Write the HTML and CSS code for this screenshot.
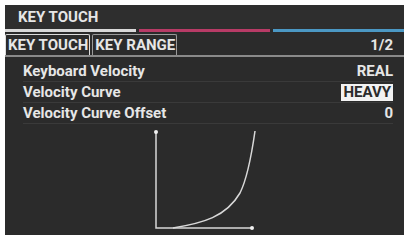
FILE: index.html
```html
<!DOCTYPE html>
<html lang="en">
<head>
    <meta charset="UTF-8">
    <title>Key Touch</title>
    <link rel="stylesheet" href="styles.css">
</head>
<body>
    <div class="screen">
        <div class="title">KEY TOUCH</div>
        <div class="bars">
            <div class="bar white"></div>
            <div class="bar pink"></div>
            <div class="bar blue"></div>
        </div>
        <div class="tabs">
            <div class="tab active">KEY TOUCH</div>
            <div class="tab">KEY RANGE</div>
            <div class="page">1/2</div>
        </div>
        <div class="params">
            <div class="row">
                <span class="label">Keyboard Velocity</span>
                <span class="value">REAL</span>
            </div>
            <div class="row">
                <span class="label">Velocity Curve</span>
                <span class="value selected">HEAVY</span>
            </div>
            <div class="row">
                <span class="label">Velocity Curve Offset</span>
                <span class="value">0</span>
            </div>
        </div>
        <div class="graph">
            <svg width="110" height="104" viewBox="0 0 110 104">
                <!-- axes -->
                <path d="M8 5 V101 H104" fill="none" stroke="#d8d8d8" stroke-width="1.5"/>
                <circle cx="8" cy="5" r="2" fill="#f0f0f0"/>
                <circle cx="104" cy="101" r="2" fill="#f0f0f0"/>
                <!-- velocity curve -->
                <path d="M25 101 C55 96 78 90 92 66 C100 50 104 25 107 4" fill="none" stroke="#d8d8d8" stroke-width="1.5"/>
            </svg>
        </div>
    </div>
</body>
</html>
```

FILE: styles.css
```css
body {
    margin: 0;
    background-color: #ffffff;
    font-family: Roboto, "Liberation Sans", sans-serif;
    font-weight: bold;
    color: #e6e6e6;
}
.screen {
    margin: 5px 5px 0 5px;
    width: 399px;
    height: 230px;
    background-color: #2b2b2b;
    display: flex;
    flex-direction: column;
    overflow: hidden;
}
.title {
    height: 24px;
    line-height: 24px;
    padding-left: 13px;
    font-size: 15px;
    background-color: #2e2e2e;
}
.bars {
    display: flex;
    gap: 3px;
    height: 3px;
}
.bar {
    flex: 1;
}
.white {
    background-color: #d9d9d9;
}
.pink {
    background-color: #b83b66;
}
.blue {
    background-color: #4b98c4;
}
.tabs {
    display: flex;
    align-items: flex-end;
    margin-top: 1px;
    height: 22px;
    border-bottom: 2px solid #8a8a8a;
}
.tab {
    height: 20px;
    line-height: 20px;
    padding: 0 1px 0 2px;
    font-size: 15px;
    border: 1px solid #9a9a9a;
    border-bottom: none;
    border-radius: 2px 2px 0 0;
    margin-right: 2px;
}
.tab.active {
    border-color: #dcdcdc;
}
.page {
    margin-left: auto;
    padding-right: 11px;
    font-size: 15px;
    line-height: 20px;
}
.params {
    padding: 4px 11px 0 18px;
}
.row {
    display: flex;
    justify-content: space-between;
    align-items: center;
    height: 20px;
    font-size: 15px;
    border-bottom: 1px solid #3a3a3a;
}
.value.selected {
    background-color: #f2f2f2;
    color: #2b2b2b;
    padding: 0 2px;
    line-height: 17px;
}
.graph {
    display: flex;
    justify-content: center;
    padding: 3px 3px 0 0;
}
```
